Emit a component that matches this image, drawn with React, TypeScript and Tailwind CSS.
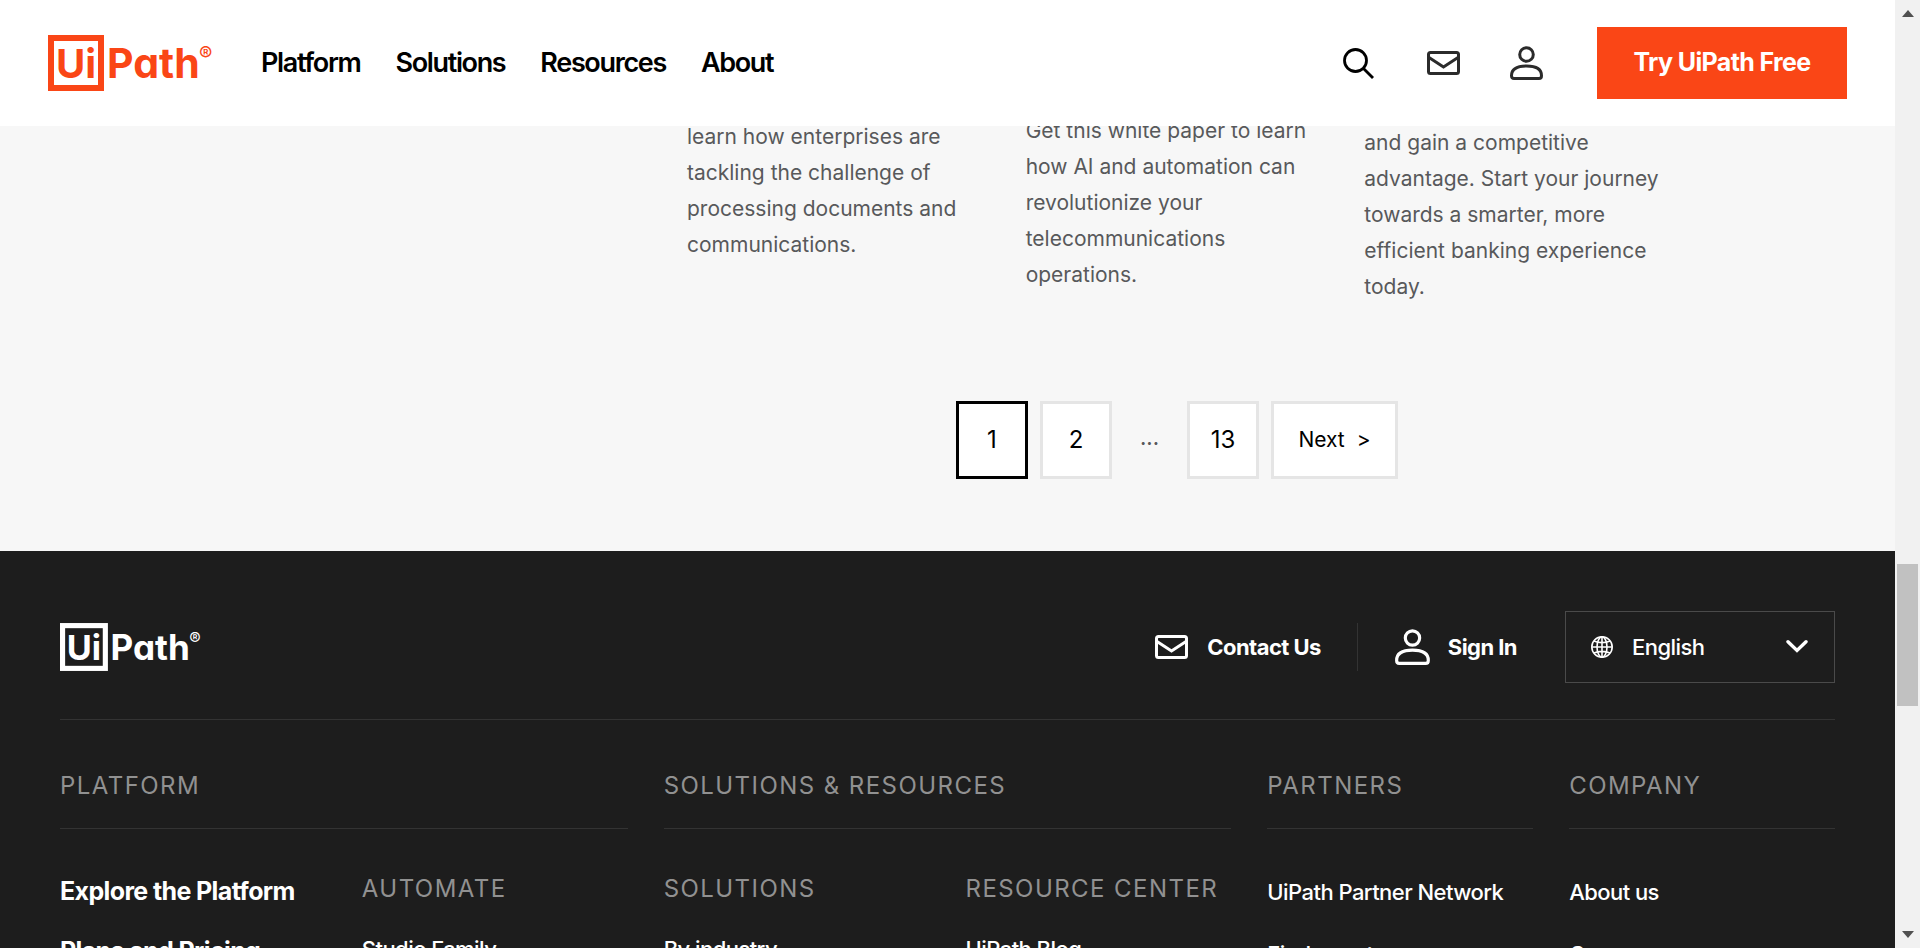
import React from "react";

type LogoProps = { className: string };

function Logo({ className }: LogoProps) {
  return (
    <svg viewBox="0 0 166 56" className={className} fill="currentColor" role="img" aria-label="UiPath">
      <rect x="3" y="3" width="50" height="50" fill="none" stroke="currentColor" strokeWidth="6" />
      <g className="font-['Inter',sans-serif] [font-feature-settings:'cv11']">
        <text x="8" y="43" fontSize="40" fontWeight="700">Ui</text>
        <text x="59" y="43" fontSize="41" fontWeight="700">Path</text>
        <text x="151" y="26" fontSize="20" fontWeight="400">®</text>
      </g>
    </svg>
  );
}

function SearchIcon() {
  return (
    <svg viewBox="0 0 36 36" className="size-9" fill="none" stroke="currentColor" strokeWidth="2.8">
      <circle cx="14.5" cy="15.5" r="11" />
      <path d="M22.500 23.500 32 33" />
    </svg>
  );
}

function MailIcon() {
  return (
    <svg viewBox="0 0 36 36" className="size-9" fill="none" stroke="currentColor" strokeWidth="3">
      <rect x="3.500" y="7.5" width="30" height="21" rx="2" />
      <path d="M4 12.500 18.500 22 33 12.500" />
    </svg>
  );
}

type UserIconProps = { className: string };

function UserIcon({ className }: UserIconProps) {
  return (
    <svg viewBox="0 0 36 36" className={className} fill="none" stroke="currentColor" strokeWidth="3" strokeLinejoin="round">
      <circle cx="17.500" cy="9.500" r="6.800" />
      <path d="M2.500 30.700c0-6.500 5.500-9.700 15-9.700s15 3.200 15 9.700c0 1.900-.700 2.800-2.500 2.800H5c-1.800 0-2.500-.900-2.500-2.800z" />
    </svg>
  );
}

function GlobeIcon() {
  return (
    <svg viewBox="0 0 24 24" className="size-6 shrink-0" fill="none" stroke="currentColor" strokeWidth="1.600">
      <circle cx="12" cy="12" r="10.200" />
      <ellipse cx="12" cy="12" rx="5" ry="10.200" />
      <path d="M12 2v20M2 12h20M4 6c4.500 2.200 11.500 2.200 16 0M4 18c4.500-2.200 11.500-2.200 16 0" />
    </svg>
  );
}

function Header() {
  const links = ["Platform", "Solutions", "Resources", "About"];
  return (
    <header className="relative z-10 flex h-[126px] items-center bg-white px-12">
      <a href="#home" className="text-[#fa4616]">
        <Logo className="h-14 w-[166px]" />
      </a>
      <nav className="ml-[47px] flex gap-[35px] text-[27px] font-semibold tracking-tighter text-black">
        {links.map((l) => (
          <a key={l} href={"#" + l.toLowerCase()}>{l}</a>
        ))}
      </nav>
      <div className="ml-auto flex items-center gap-12 text-[#2b2b2b]">
        <button type="button" aria-label="Search" className="text-black"><SearchIcon /></button>
        <a href="#contact" aria-label="Contact"><MailIcon /></a>
        <a href="#account" aria-label="Account"><UserIcon className="size-9" /></a>
      </div>
      <a href="#trial" className="ml-[52px] flex h-[72px] w-[250px] items-center justify-center bg-[#fa4616] text-[25px] font-bold tracking-tight text-white">
        Try UiPath Free
      </a>
    </header>
  );
}

function Results() {
  const pageBox = "flex h-[78px] items-center justify-center border-[3px] bg-white text-black";
  return (
    <main className="-mt-[13px] bg-[#f7f7f7] pb-[72px] pl-[687px]">
      <div className="grid w-[980px] grid-cols-3 gap-9 text-[21px] leading-9 text-[#58595b]">
        <p className="pt-1.5">learn how enterprises are tackling the challenge of processing documents and communications.</p>
        <p>Get this white paper to learn how AI and automation can revolutionize your telecommunications operations.</p>
        <p className="pt-3">and gain a competitive advantage. Start your journey towards a smarter, more efficient banking experience today.</p>
      </div>
      <nav aria-label="Pagination" className="mt-24 flex w-[980px] items-center justify-center gap-3 text-2xl">
        <button type="button" aria-current="page" className={pageBox + " w-[72px] border-black"}>1</button>
        <button type="button" className={pageBox + " w-[72px] border-[#e5e5e5]"}>2</button>
        <span className="w-[51px] pb-1 text-center text-[21px] font-medium text-[#58595b]">...</span>
        <button type="button" className={pageBox + " w-[72px] border-[#e5e5e5]"}>13</button>
        <button type="button" className={pageBox + " w-[127px] gap-3 border-[#e5e5e5] text-[21px]"}>
          <span>Next</span>
          <span>&gt;</span>
        </button>
      </nav>
    </main>
  );
}

function Footer() {
  const section = "border-b border-[#333] pb-[26px]";
  const heading = "text-2xl leading-8 font-normal tracking-[0.06em] text-[#919191] uppercase";
  const link = "block text-[22px] leading-8 font-medium tracking-tight";
  return (
    <footer className="bg-[#1d1d1d] px-[60px] pt-[60px] text-white">
      <div className="flex items-center border-b border-[#333] pb-9">
        <a href="#home"><Logo className="h-12 w-[142px]" /></a>
        <a href="#contact" className="ml-auto flex items-center gap-[18px] text-[22px] font-bold tracking-tight">
          <MailIcon />
          Contact Us
        </a>
        <span className="mx-9 h-12 w-px bg-[#333]" />
        <a href="#signin" className="flex items-center gap-4 text-[22px] font-bold tracking-tight">
          <UserIcon className="size-[38px]" />
          Sign In
        </a>
        <label className="ml-12 flex h-[72px] w-[270px] items-center border border-[#4a4a4a] px-6">
          <GlobeIcon />
          <select aria-label="Language" className="ml-[18px] min-w-0 flex-1 appearance-none bg-transparent text-[22px] font-medium tracking-tight">
            <option>English</option>
          </select>
          <svg viewBox="0 0 24 24" className="pointer-events-none size-6 shrink-0" fill="none" stroke="currentColor" strokeWidth="3.400" strokeLinecap="round">
            <path d="M2 6.800 11 15.500l9-8.700" />
          </svg>
        </label>
      </div>

      <div className="grid grid-cols-6 gap-x-9 pt-[50px]">
        <h2 className={heading + " col-span-2 " + section}>Platform</h2>
        <h2 className={heading + " col-span-2 " + section}>Solutions &amp; Resources</h2>
        <h2 className={heading + " " + section}>Partners</h2>
        <h2 className={heading + " " + section}>Company</h2>
      </div>

      <div className="grid h-[119px] grid-cols-6 gap-x-9 overflow-hidden pt-11">
        <div className="flex flex-col gap-7 pt-0.5 text-[25px] leading-8 font-bold tracking-tight whitespace-nowrap">
          <a href="#explore">Explore the Platform</a>
          <a href="#pricing">Plans and Pricing</a>
        </div>
        <div>
          <h3 className={heading}>Automate</h3>
          <a href="#studio" className={link + " mt-7"}>Studio Family</a>
        </div>
        <div>
          <h3 className={heading}>Solutions</h3>
          <a href="#industry" className={link + " mt-7"}>By industry</a>
        </div>
        <div>
          <h3 className={heading + " whitespace-nowrap"}>Resource Center</h3>
          <a href="#blog" className={link + " mt-7"}>UiPath Blog</a>
        </div>
        <div className="flex flex-col gap-[30px] pt-[3px] whitespace-nowrap">
          <a href="#partners" className={link}>UiPath Partner Network</a>
          <a href="#find" className={link}>Find a partner</a>
        </div>
        <div className="flex flex-col gap-[30px] pt-[3px]">
          <a href="#about-us" className={link}>About us</a>
          <a href="#careers" className={link}>Careers</a>
        </div>
      </div>
    </footer>
  );
}

function ScrollRail() {
  return (
    <div aria-hidden="true" className="flex w-[25px] shrink-0 flex-col items-center bg-[#f1f1f1]">
      <svg viewBox="0 0 12 7" className="mt-2.5 h-[7px] w-3 fill-[#505050]"><path d="M0 7 6 0l6 7z" /></svg>
      <div className="mt-[547px] h-[142px] w-[21px] bg-[#c1c1c1]" />
      <svg viewBox="0 0 12 7" className="mt-auto mb-2.5 h-[7px] w-3 fill-[#505050]"><path d="M0 0h12L6 7z" /></svg>
    </div>
  );
}

export default function App() {
  return (
    <div className="flex h-screen overflow-hidden bg-[#f7f7f7] font-['Inter',sans-serif]">
      <div className="min-w-0 flex-1 overflow-hidden">
        <Header />
        <Results />
        <Footer />
      </div>
      <ScrollRail />
    </div>
  );
}
